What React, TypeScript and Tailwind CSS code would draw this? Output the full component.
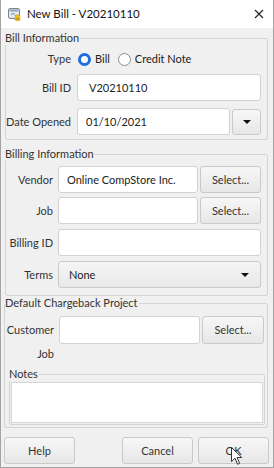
import React from "react"

function Radio({ checked }: { checked?: boolean }) {
  return checked ? (
    <span className="w-[13px] h-[13px] rounded-full border-[3.5px] border-[#1c6fdc] bg-white" />
  ) : (
    <span className="w-[13px] h-[13px] rounded-full border border-[#8d8d8d] bg-white" />
  )
}

function Field({ value, className = "" }: { value?: string; className?: string }) {
  return (
    <div
      className={`h-[27px] bg-white border border-[#d2d2d2] rounded-[3px] flex items-center pl-[8px] text-[#222] ${className}`}
    >
      {value}
    </div>
  )
}

function Btn({ label, className = "" }: { label: string; className?: string }) {
  return (
    <div
      className={`h-[27px] rounded-[3px] border border-[#c9c9c9] bg-gradient-to-b from-[#f7f7f7] to-[#e7e7e7] flex items-center justify-center text-[#333] ${className}`}
    >
      {label}
    </div>
  )
}

function Caret() {
  return <span className="w-0 h-0 border-x-[4px] border-x-transparent border-t-[4px] border-t-[#111]" />
}

function Label({ text, w }: { text: string; w: string }) {
  return <div className={`${w} shrink-0 text-right`}>{text}</div>
}

export default function App() {
  return (
    <div className="relative w-[274px] h-[468px] flex flex-col bg-[#f0f0f0] border-x border-b border-[#a3a3a3] text-[11px] text-[#333] font-['Lato','Noto_Sans',sans-serif] leading-[14px]">
      {/* Title bar */}
      <div className="h-[28px] shrink-0 bg-white flex items-center pl-[7px] pr-[9px]">
        <svg width="13" height="13" viewBox="0 0 13 13" className="mr-[6px]">
          <rect x="0.5" y="0.5" width="11" height="10" rx="1.5" fill="#e4e6ea" stroke="#7d8591" />
          <rect x="1.5" y="1.5" width="9" height="2" fill="#8fa6c4" />
          <path d="M3 6.5 L5 5.5 L7 6.5" stroke="#5a7db0" strokeWidth="0.8" fill="none" />
          <ellipse cx="9.5" cy="8" rx="2.6" ry="1.1" fill="#f2c21b" stroke="#b58805" strokeWidth="0.5" />
          <rect x="6.9" y="8" width="5.2" height="3.6" fill="#f2c21b" />
          <ellipse cx="9.5" cy="11.6" rx="2.6" ry="1.1" fill="#e0a911" stroke="#b58805" strokeWidth="0.5" />
          <path d="M6.9 9.8 H12.1" stroke="#c8940a" strokeWidth="0.5" />
        </svg>
        <span className="text-[11.5px] text-[#111]">New Bill - V20210110</span>
        <svg width="10" height="10" viewBox="0 0 10 10" className="ml-auto">
          <path d="M1 1 L9 9 M9 1 L1 9" stroke="#222" strokeWidth="1.1" />
        </svg>
      </div>

      <div className="flex-1 flex flex-col pl-[4px] pr-[5px]">
        {/* Bill Information */}
        <fieldset className="mt-[3px] border border-[#d4d4d4] rounded-[2px]">
          <legend className="-ml-[1px] pr-[1px]">Bill Information</legend>
          <div className="flex flex-col pr-[6px] pb-[4px]">
            <div className="mt-[6px] h-[16px] flex items-center">
              <Label text="Type" w="w-[65px]" />
              <div className="ml-[7px] flex items-center gap-[4px]">
                <Radio checked />
                <span className="text-[#222]">Bill</span>
                <span className="ml-[4px] flex items-center gap-[4px]">
                  <Radio />
                  <span className="text-[#222]">Credit Note</span>
                </span>
              </div>
            </div>
            <div className="mt-[7px] flex items-center gap-[6px]">
              <Label text="Bill ID" w="w-[65px]" />
              <Field value="V20210110" className="flex-1 h-[26px] pl-[11px]" />
            </div>
            <div className="mt-[7px] flex items-center gap-[6px]">
              <Label text="Date Opened" w="w-[65px]" />
              <Field value="01/10/2021" className="flex-1 h-[26px]" />
              <div className="w-[29px] h-[26px] -ml-[4px] rounded-[3px] border border-[#c9c9c9] bg-gradient-to-b from-[#f7f7f7] to-[#e7e7e7] flex items-center justify-center">
                <Caret />
              </div>
            </div>
          </div>
        </fieldset>

        {/* Billing Information */}
        <fieldset className="mt-[7px] border border-[#d4d4d4] rounded-[2px]">
          <legend className="-ml-[1px] pr-[1px]">Billing Information</legend>
          <div className="flex flex-col pr-[6px] pb-[7px]">
            <div className="mt-[5px] flex items-center gap-[5px]">
              <Label text="Vendor" w="w-[47px]" />
              <Field value="Online CompStore Inc." className="flex-1" />
              <Btn label="Select..." className="w-[61px] -ml-[3px]" />
            </div>
            <div className="mt-[4px] flex items-center gap-[5px]">
              <Label text="Job" w="w-[47px]" />
              <Field className="flex-1" />
              <Btn label="Select..." className="w-[61px] -ml-[3px]" />
            </div>
            <div className="mt-[5px] flex items-center gap-[5px]">
              <Label text="Billing ID" w="w-[47px]" />
              <Field className="flex-1" />
            </div>
            <div className="mt-[5px] flex items-center gap-[5px]">
              <Label text="Terms" w="w-[47px]" />
              <div className="flex-1 h-[27px] rounded-[3px] border border-[#c9c9c9] bg-gradient-to-b from-[#f5f5f5] to-[#e8e8e8] flex items-center pl-[10px] pr-[11px] text-[#222]">
                <span>None</span>
                <span className="ml-auto flex">
                  <Caret />
                </span>
              </div>
            </div>
          </div>
        </fieldset>

        {/* Default Chargeback Project */}
        <fieldset className="-ml-[1px] border border-[#d4d4d4] rounded-[2px]">
          <legend className="pr-[1px]">Default Chargeback Project</legend>
          <div className="flex flex-col pr-[3px] pb-[2px]">
            <div className="mt-[6px] flex items-center gap-[5px]">
              <Label text="Customer" w="w-[49px]" />
              <Field className="flex-1 h-[28px]" />
              <Btn label="Select..." className="w-[62px] h-[28px] -ml-[3px]" />
            </div>
            <div className="mt-[3px] h-[14px] flex items-center">
              <Label text="Job" w="w-[49px]" />
            </div>
            <fieldset className="mt-[6px] ml-[4px] mr-[-1px] border border-[#d4d4d4] rounded-[2px]">
              <legend className="-ml-[1px] pr-[1px]">Notes</legend>
              <div className="px-[1px] pt-[1px] pb-[1px]">
                <div className="h-[41px] bg-white border border-[#d6d6d6]" />
              </div>
            </fieldset>
          </div>
        </fieldset>

        {/* Buttons */}
        <div className="mt-[9px] flex items-center -ml-[1px] pr-[-1px]">
          <Btn label="Help" className="w-[71px]" />
          <Btn label="Cancel" className="w-[71px] ml-auto" />
          <Btn label="OK" className="w-[71px] ml-[5px] -mr-[1px]" />
        </div>
      </div>

      {/* Mouse pointer */}
      <svg width="12" height="19" viewBox="0 0 12 19" className="absolute left-[230px] top-[447px]">
        <path
          d="M0.5 0.5 L0.5 14.5 L4 11.2 L6.6 17.3 L8.6 16.4 L6.1 10.5 L10.8 10.5 Z"
          fill="#fff"
          stroke="#333"
          strokeWidth="1"
          strokeLinejoin="round"
        />
      </svg>
    </div>
  )
}
